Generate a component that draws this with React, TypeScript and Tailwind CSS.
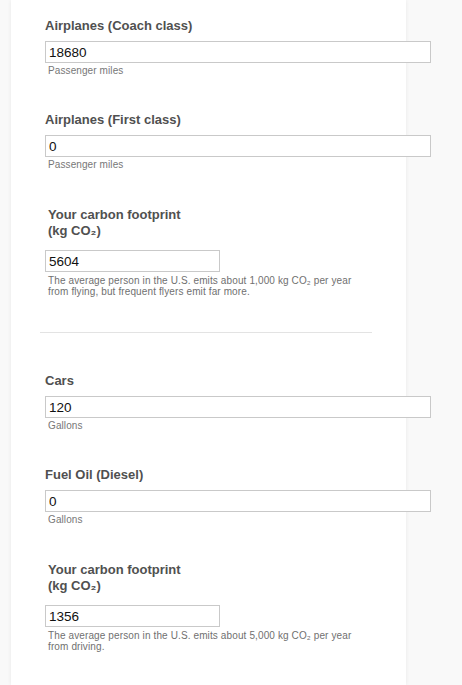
import React from "react";

const Field = ({
  label,
  value,
  hint,
  className = "",
}: {
  label: string;
  value: string;
  hint: string;
  className?: string;
}) => (
  <div className={className}>
    <p className="text-[13px] leading-4 font-bold text-[#505050]">{label}</p>
    <input
      readOnly
      value={value}
      className="mt-[7px] block h-[22px] w-[386px] border border-[#c9c9c9] bg-white pl-[3px] text-[13.5px] text-[#111] outline-none"
    />
    <p className="mt-[2px] pl-[3px] text-[10px] leading-[12px] tracking-[0.1px] text-[#777]">{hint}</p>
  </div>
);

const Footprint = ({
  value,
  note,
  className = "",
}: {
  value: string;
  note: string;
  className?: string;
}) => (
  <div className={className}>
    <p className="pl-[3px] text-[13px] leading-4 font-bold text-[#505050]">
      Your carbon footprint
      <br />
      (kg CO₂)
    </p>
    <input
      readOnly
      value={value}
      className="mt-[11px] block h-[22px] w-[175px] border border-[#c9c9c9] bg-white pl-[3px] text-[13.5px] text-[#111] outline-none"
    />
    <p className="mt-[3px] w-[320px] pl-[3px] text-[10px] leading-[11px] tracking-[0.12px] text-[#707070]">
      {note}
    </p>
  </div>
);

export default function App() {
  return (
    <div className="min-h-screen bg-[#f9f9f9] font-['Liberation_Sans',Arial,sans-serif]">
      <div className="ml-[11px] min-h-[685px] w-[395px] bg-white pl-[34px] pt-[18px] shadow-[0_0_4px_rgba(0,0,0,0.07)]">
        <Field label="Airplanes (Coach class)" value="18680" hint="Passenger miles" />
        <Field
          className="mt-[35px]"
          label="Airplanes (First class)"
          value="0"
          hint="Passenger miles"
        />
        <Footprint
          className="mt-[36px]"
          value="5604"
          note="The average person in the U.S. emits about 1,000 kg CO₂ per year from flying, but frequent flyers emit far more."
        />
        <div className="ml-[-5px] mt-[35px] w-[332px] border-t border-[#e3e3e3]" />
        <Field className="mt-[40px]" label="Cars" value="120" hint="Gallons" />
        <Field className="mt-[35px]" label="Fuel Oil (Diesel)" value="0" hint="Gallons" />
        <Footprint
          className="mt-[36px]"
          value="1356"
          note="The average person in the U.S. emits about 5,000 kg CO₂ per year from driving."
        />
      </div>
    </div>
  );
}
